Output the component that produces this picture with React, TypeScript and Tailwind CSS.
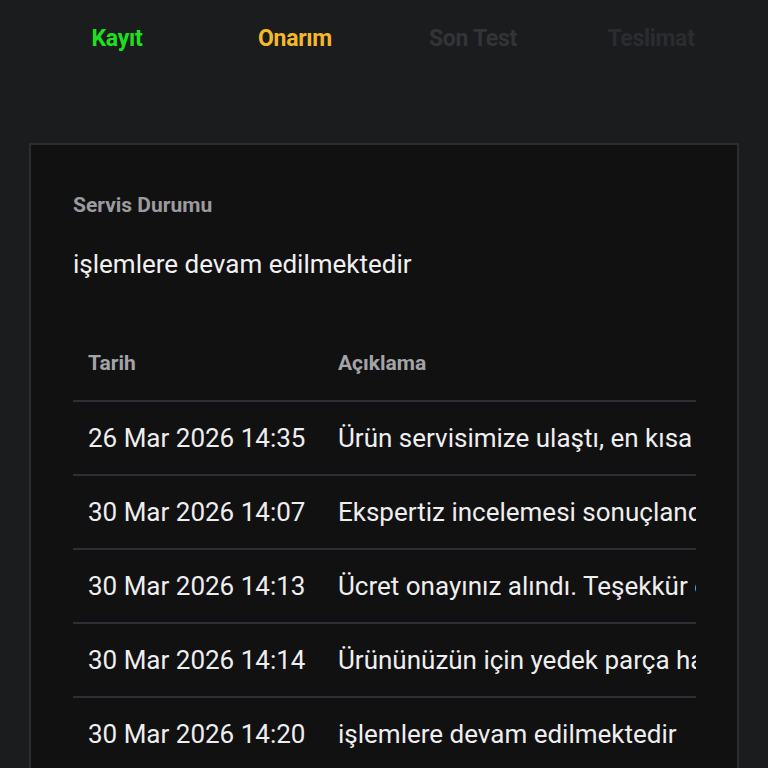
import React from 'react';

const steps = [
    { label: 'Kayıt', color: 'text-[#1fe01f]' },
    { label: 'Onarım', color: 'text-[#f5b82a]' },
    { label: 'Son Test', color: 'text-[#333437]' },
    { label: 'Teslimat', color: 'text-[#2b2c2f]' },
];

const history = [
    { date: '26 Mar 2026 14:35', text: 'Ürün servisimize ulaştı, en kısa sürede incelenecektir.' },
    { date: '30 Mar 2026 14:07', text: 'Ekspertiz incelemesi sonuçlandı, fiyat teklifi iletildi.' },
    { date: '30 Mar 2026 14:13', text: 'Ücret onayınız alındı. Teşekkür ederiz.' },
    { date: '30 Mar 2026 14:14', text: 'Ürününüzün için yedek parça hazırlanmaktadır.' },
    { date: '30 Mar 2026 14:20', text: 'işlemlere devam edilmektedir' },
];

export default function App() {
    return (
        <div className="min-h-[768px] bg-[#1b1c1e] font-['Roboto',sans-serif] overflow-hidden">
            {/* Progress steps */}
            <div className="w-[695px] overflow-hidden">
                <div className="ml-[28px] w-[712px] grid grid-cols-4 h-[143px] pt-[23px]">
                    {steps.map((s) => (
                        <div key={s.label} className={`text-center text-[23px] font-bold leading-[32px] tracking-[-0.3px] ${s.color}`}>
                            {s.label}
                        </div>
                    ))}
                </div>
            </div>

            {/* Status card */}
            <div className="mx-[29px] bg-[#111112] border-2 border-[#2c2d30] px-[42px] pt-[47px] pb-[40px]">
                <p className="text-[21px] font-bold text-[#9a9b9e] leading-[26px]">Servis Durumu</p>
                <p className="mt-[30px] text-[26px] text-[#f0f0f0] leading-[32px]">işlemlere devam edilmektedir</p>

                {/* History list */}
                <div className="mt-[70px] w-[623px] overflow-hidden whitespace-nowrap">
                    <div className="flex border-b-2 border-[#2e2f32] pb-[24px]">
                        <div className="w-[250px] shrink-0 px-[15px] text-[21px] font-bold text-[#a3a4a7] leading-[26px]">Tarih</div>
                        <div className="px-[15px] text-[21px] font-bold text-[#a3a4a7] leading-[26px]">Açıklama</div>
                    </div>
                    {history.map((h) => (
                        <div key={h.date} className="flex items-center h-[74px] border-b-2 border-[#2e2f32] text-[26px] text-[#eeeeee]">
                            <div className="w-[250px] shrink-0 px-[15px]">{h.date}</div>
                            <div className="px-[15px]">{h.text}</div>
                        </div>
                    ))}
                </div>
            </div>
        </div>
    );
}
